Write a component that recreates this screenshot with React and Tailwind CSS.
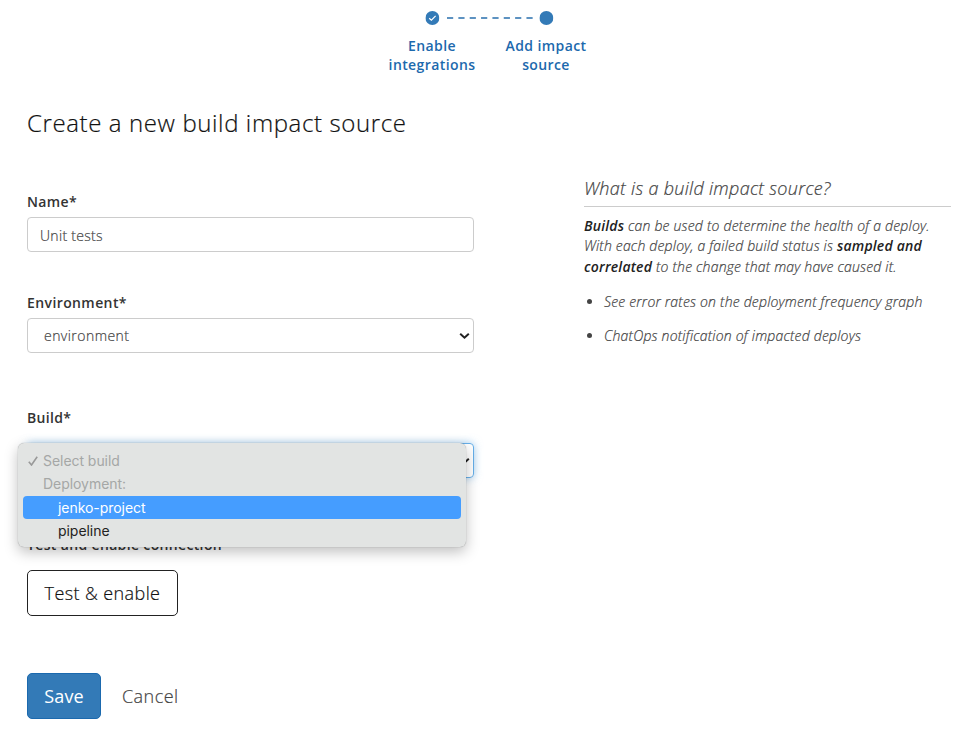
import React from "react";

const steps = [
  { lines: ["Enable", "integrations"], done: true },
  { lines: ["Add impact", "source"], done: false },
];

function Chevron() {
  return (
    <svg className="absolute right-[3px] top-1/2 -translate-y-1/2" width="11" height="7" viewBox="0 0 11 7" fill="none" stroke="#222" strokeWidth="2">
      <path d="M1.2 1.2 L5.5 5.2 L9.8 1.2" />
    </svg>
  );
}

function Stepper() {
  return (
    <div className="flex h-[80px] pl-[375px] pt-[11px]">
      {steps.map((s) => (
        <div key={s.lines[0]} className="relative flex w-[114px] flex-col items-center">
          <svg className="translate-x-[0.4px]" width="14" height="14" viewBox="0 0 14 14">
            <circle cx="7" cy="7" r="7" fill="#337ab7" />
            {s.done && <path d="M3.8 7.2 L6 9.2 L10.2 4.8" fill="none" stroke="#fff" strokeWidth="1.2" />}
          </svg>
          {s.done && (
            <svg className="absolute left-[71px] top-[6px]" width="88" height="2">
              <path d="M1 1 H87.5" stroke="#286fad" strokeWidth="1.7" strokeDasharray="6.2 5.15" />
            </svg>
          )}
          <div className="mt-[11px] text-center text-[14px] font-semibold leading-[19px] tracking-[0.4px] text-[#1c69ad]">
            {s.lines.map((l) => <div key={l}>{l}</div>)}
          </div>
        </div>
      ))}
    </div>
  );
}

export default function App() {
  return (
    <div className="h-[730px] w-[965px] overflow-hidden bg-white font-['Open_Sans',sans-serif] font-light tracking-[0.3px] text-[#444]">
      <Stepper />
      <h1 className="ml-[27px] mt-[26px] h-[34px] whitespace-nowrap text-[24px] font-light leading-[34px] tracking-[0.61px] text-[#111] [-webkit-text-stroke:0.2px]">Create a new build impact source</h1>
      <div className="flex">
        <div className="ml-[27px] w-[447px] pt-[52px]">
          <div className="h-[25px] text-[14px] font-semibold leading-[20px] tracking-[0.35px] text-[#333]">Name*</div>
          <div className="flex h-[35px] items-center rounded-[4px] border border-[#ccc] px-[12px] pt-px text-[14px] [-webkit-text-stroke:0.2px]">Unit tests</div>
          <div className="mt-[40.5px] h-[25.5px] text-[14px] font-semibold leading-[20px] tracking-[0.4px] text-[#333]">Environment*</div>
          <div className="relative flex h-[35px] items-center rounded-[4px] border border-[#ccc] px-[16px] text-[14px] tracking-[0.45px] [-webkit-text-stroke:0.2px]">environment<Chevron /></div>
          <div className="mt-[55px] h-[35px] text-[14px] font-semibold leading-[20px] tracking-[0.3px] text-[#333]">Build*</div>
          <div className="relative h-[35px]">
            <div className="relative h-[35px] rounded-[4px] border border-[#66afe9] shadow-[0_0_8px_rgba(102,175,233,0.6)]"><Chevron /></div>
            <div className="absolute left-[-9px] top-0 z-10 h-[104px] w-[448px] rounded-[6px] bg-[#e2e4e3] px-[5px] pt-[6px] font-[Inter,sans-serif] text-[14px] font-normal leading-[23.4px] tracking-[-0.05px] text-[#a5a7a6] shadow-[0_0_1px_rgba(0,0,0,0.4),0_5px_14px_rgba(0,0,0,0.25)]">
              <div className="flex h-[23.4px] items-center pl-[5px]">
                <svg className="mr-[5px]" width="10" height="10" viewBox="0 0 10 10"><path d="M0.8 5.8 L3.5 9 L9.2 0.8" fill="none" stroke="#999" strokeWidth="1.6" /></svg>Select build
              </div>
              <div className="h-[23.4px] pl-[20px]">Deployment:</div>
              <div className="h-[23.4px] rounded-[4px] bg-[#459dff] pl-[35px] text-white">jenko-project</div>
              <div className="h-[23.4px] pl-[35px] text-[#222]">pipeline</div>
            </div>
          </div>
          <div className="mt-[57px] h-[35px] text-[14px] font-semibold leading-[20px] tracking-[0.35px] text-[#333]">Test and enable connection</div>
          <button className="block h-[46px] w-[151px] rounded-[5px] border border-[#222] text-[18px] font-light tracking-[0.4px] text-[#111] [-webkit-text-stroke:0.2px]">Test &amp; enable</button>
          <div className="mt-[57px] flex items-center">
            <button className="h-[46px] w-[74px] rounded-[5px] border border-[#1b69ae] bg-[#337ab7] pt-px text-[18px] font-normal tracking-[0.1px] text-white">Save</button>
            <button className="ml-[21px] pt-px text-[18px] font-light tracking-[0.45px] [-webkit-text-stroke:0.2px]">Cancel</button>
          </div>
        </div>
        <aside className="ml-[110px] w-[367px] pt-[34px] text-[14px] italic tracking-[0.19px] [-webkit-text-stroke:0.2px]">
          <h2 className="h-[33px] border-b border-[#ccc] text-[18px] font-light leading-[28px] tracking-[0.3px]">What is a build impact source?</h2>
          <p className="mt-[9px] whitespace-nowrap leading-[20.3px]"><b className="font-semibold text-[#222] [-webkit-text-stroke:0]">Builds</b> can be used to determine the health of a deploy.<br />With each deploy, a failed build status is <b className="font-semibold text-[#222] [-webkit-text-stroke:0]">sampled and</b><br /><b className="font-semibold text-[#222] [-webkit-text-stroke:0]">correlated</b> to the change that may have caused it.</p>
          <ul className="mt-[15px] list-disc space-y-[14.5px] whitespace-nowrap pl-[20px] leading-[20px]"><li>See error rates on the deployment frequency graph</li><li>ChatOps notification of impacted deploys</li></ul>
        </aside>
      </div>
    </div>
  );
}
